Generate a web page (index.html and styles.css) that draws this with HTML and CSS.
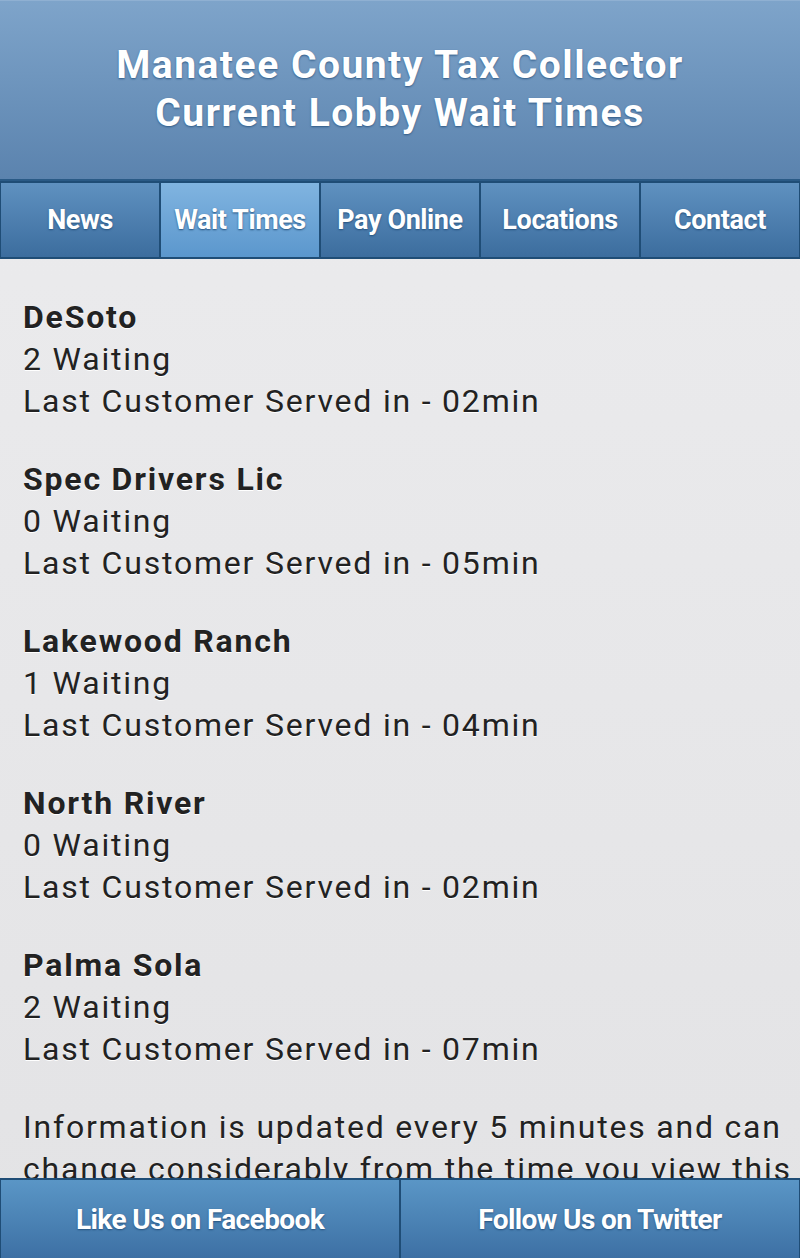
FILE: index.html
```html
<!DOCTYPE html>
<html lang="en">
<head>
    <meta charset="UTF-8">
    <meta name="viewport" content="width=device-width, initial-scale=1.0">
    <title>Lobby Wait Times</title>
    <link rel="stylesheet" href="styles.css">
</head>
<body>
    <div class="header">
        <h1>Manatee County Tax Collector<br>Current Lobby Wait Times</h1>
    </div>
    <div class="navbar">
        <a href="#" class="navBtn">News</a>
        <a href="#" class="navBtn active">Wait Times</a>
        <a href="#" class="navBtn">Pay Online</a>
        <a href="#" class="navBtn">Locations</a>
        <a href="#" class="navBtn">Contact</a>
    </div>
    <div class="content">
        <div class="office">
            <b>DeSoto</b><br>2 Waiting<br>Last Customer Served in - 02min
        </div>
        <div class="office">
            <b>Spec Drivers Lic</b><br>0 Waiting<br>Last Customer Served in - 05min
        </div>
        <div class="office">
            <b>Lakewood Ranch</b><br>1 Waiting<br>Last Customer Served in - 04min
        </div>
        <div class="office">
            <b>North River</b><br>0 Waiting<br>Last Customer Served in - 02min
        </div>
        <div class="office">
            <b>Palma Sola</b><br>2 Waiting<br>Last Customer Served in - 07min
        </div>
        <p class="info">Information is updated every 5 minutes and can change considerably from the time you view this page.</p>
    </div>
    <div class="footer">
        <a href="#" class="footBtn">Like Us on Facebook</a>
        <a href="#" class="footBtn">Follow Us on Twitter</a>
    </div>
</body>
</html>
```

FILE: styles.css
```css
body {
    margin: 0;
    height: 1258px;
    overflow: hidden;
    font-family: Roboto, "Liberation Sans", sans-serif;
    background: linear-gradient(#ececee, #e3e3e5);
    color: #222;
}
.header {
    height: 181px;
    border-top: 1px solid #8fb0d2;
    border-bottom: 2px solid #2a5a86;
    background: linear-gradient(#7ea4ca, #5b83ae);
    display: flex;
    align-items: center;
    justify-content: center;
    box-sizing: border-box;
    padding-bottom: 2px;
}
.header h1 {
    margin: 0;
    color: #fff;
    font-size: 39px;
    line-height: 48px;
    letter-spacing: 1.5px;
    font-weight: bold;
    text-align: center;
    text-shadow: 0 1px 2px #2f5a86;
}
.navbar {
    display: grid;
    grid-template-columns: repeat(5, 1fr);
    height: 78px;
}
.navBtn,
.footBtn {
    display: flex;
    align-items: center;
    justify-content: center;
    color: #fff;
    text-decoration: none;
    font-weight: bold;
    text-shadow: 0 1px 2px #24507c;
    border: 2px solid #1f4d76;
    border-left-width: 1px;
    border-right-width: 1px;
}
.navBtn {
    font-size: 27px;
    letter-spacing: -0.4px;
    background: linear-gradient(#5f91c0, #3c6d9e);
}
.navBtn.active {
    background: linear-gradient(#80b4e0, #5b97cd);
}
.content {
    padding: 14px 6px 0 23px;
    font-size: 32px;
    line-height: 42px;
    letter-spacing: 1.8px;
    text-shadow: 0 1px 0 #fff;
}
.office {
    margin: 23px 0 36px;
}
.office + .office {
    margin-top: 0;
}
.info {
    margin: 0;
}
.footer {
    position: fixed;
    left: 0;
    right: 0;
    bottom: 0;
    height: 80px;
    display: grid;
    grid-template-columns: 1fr 1fr;
}
.footBtn {
    font-size: 28px;
    letter-spacing: -0.6px;
    background: linear-gradient(#5a96c6, #3d70a4);
    border-bottom: 0;
}
```
